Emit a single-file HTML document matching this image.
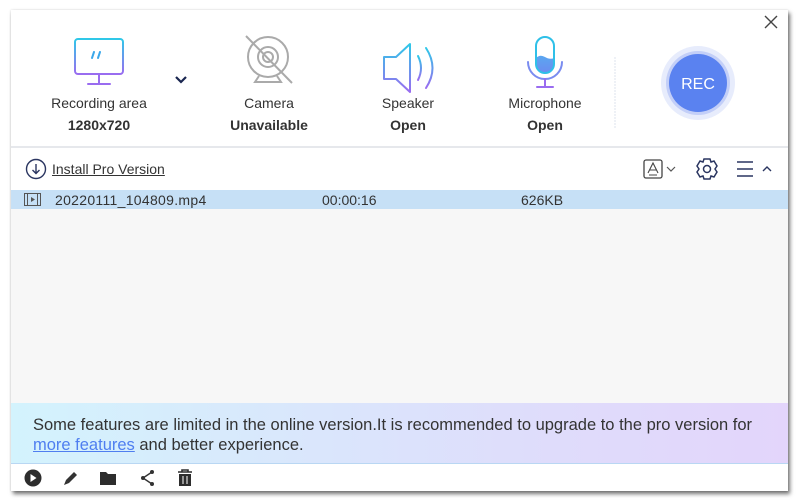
<!DOCTYPE html>
<html><head><meta charset="utf-8"><style>
*{margin:0;padding:0;box-sizing:border-box}
body{width:800px;height:504px;background:#fff;position:relative;overflow:hidden;font-family:"Liberation Sans","DejaVu Sans",sans-serif;color:#333}
#win{position:absolute;left:11px;top:10px;width:777px;height:481px;background:#fff;box-shadow:2px 3px 4px rgba(0,0,0,.55),0 0 2px rgba(0,0,0,.15)}
.abs{position:absolute}
.lbl{position:absolute;font-size:14px;color:#333;text-align:center;width:140px}
.val{position:absolute;font-size:14px;font-weight:bold;color:#333;text-align:center;width:140px}
</style></head><body>
<div id="win">
<svg class="abs" style="left:0;top:0" width="777" height="140">
<defs>
<linearGradient id="g" x1="0" y1="0" x2="0" y2="1"><stop offset="0" stop-color="#2fc8e8"/><stop offset="1" stop-color="#9a6cf0"/></linearGradient>
<linearGradient id="gf" x1="0" y1="0" x2="0" y2="1"><stop offset="0" stop-color="#5aa7f0"/><stop offset="1" stop-color="#6b8cf0"/></linearGradient>
</defs>
<g stroke="url(#g)" stroke-width="2" fill="none" stroke-linecap="round">
<rect x="64" y="29" width="48" height="35" rx="3"/>
<line x1="83" y1="42" x2="81" y2="48" stroke="#3aa7ea"/>
<line x1="89" y1="42" x2="87" y2="48" stroke="#3aa7ea"/>
</g>
<g stroke="#9a6cf0" stroke-width="2" fill="none" stroke-linecap="round">
<line x1="88" y1="65" x2="88" y2="74"/>
<line x1="77" y1="74" x2="99" y2="74"/>
</g>
<path d="M165 67 l5 5 l5 -5" stroke="#1a2650" stroke-width="2.2" fill="none"/>
<g stroke="#aaa" stroke-width="2" fill="none">
<circle cx="257" cy="47" r="20"/>
<circle cx="257" cy="47" r="10"/>
<circle cx="257" cy="47" r="5"/>
<path d="M248 66 L244 72 L270 72 L266 66"/>
<line x1="235" y1="26" x2="281" y2="73"/>
</g>
<g stroke="url(#g)" stroke-width="2" fill="none" stroke-linejoin="round" stroke-linecap="round">
<path d="M373 47 h12 l14 -13 v48 l-14 -13 h-12 z"/>
<path d="M407 46 q6 12 0 24"/>
<path d="M415 38 q13 20 0 40"/>
</g>
<path d="M525 48 q4 -4 9 -1 q5 3 9 1 v6 a9 9 0 0 1 -18 0z" fill="url(#gf)"/>
<rect x="525" y="27" width="18" height="36" rx="9" stroke="#2fc0e8" stroke-width="2" fill="none"/>
<path d="M517 52 a17 17 0 0 0 34 0" stroke="#7a8cf0" stroke-width="2" fill="none" stroke-linecap="round"/>
<g stroke="#9a6cf0" stroke-width="2" fill="none" stroke-linecap="round">
<line x1="534" y1="69" x2="534" y2="77"/>
<line x1="526" y1="77" x2="542" y2="77"/>
</g>
<line x1="604" y1="47" x2="604" y2="119" stroke="#dde3ee" stroke-width="1" stroke-dasharray="2,1"/>
<circle cx="687" cy="73" r="37" fill="#e7ecfc"/>
<circle cx="687" cy="73" r="32" fill="#c3cff8"/>
<circle cx="687" cy="73" r="29" fill="#5a82f0"/>
<text x="687" y="79" text-anchor="middle" font-family="Liberation Sans,sans-serif" font-size="16" fill="#fff">REC</text>
<path d="M754 6 l12 12 M766 6 l-12 12" stroke="#444" stroke-width="1.4"/>
</svg>
<div class="lbl" style="left:18px;top:85px">Recording area</div>
<div class="val" style="left:18px;top:107px">1280x720</div>
<div class="lbl" style="left:188px;top:85px">Camera</div>
<div class="val" style="left:188px;top:107px">Unavailable</div>
<div class="lbl" style="left:327px;top:85px">Speaker</div>
<div class="val" style="left:327px;top:107px">Open</div>
<div class="lbl" style="left:464px;top:85px">Microphone</div>
<div class="val" style="left:464px;top:107px">Open</div>
<div class="abs" style="left:0;top:136px;width:777px;height:2px;background:#e6e8ec"></div>
<svg class="abs" style="left:0;top:138px" width="777" height="42">
<circle cx="25" cy="21" r="9.5" stroke="#2a3560" stroke-width="1.4" fill="none"/>
<path d="M25 16 v9 M21.5 22 l3.5 3.5 l3.5 -3.5" stroke="#2a3560" stroke-width="1.4" fill="none"/>
<rect x="633" y="12" width="18" height="18" rx="2" stroke="#444" stroke-width="1.3" fill="none"/>
<path d="M637 25 l5 -10 l5 10 M638 27 h8 M639 22 h6" stroke="#444" stroke-width="1.1" fill="none"/>
<path d="M656 19 l4 4 l4 -4" stroke="#555" stroke-width="1.2" fill="none"/>
<g transform="translate(696 21)" stroke="#2a3560" stroke-width="1.5" fill="none">
<path d="M-3 -10 h6 l1 3 l3 -1 l3 5 l-2 3 l2 3 l-3 5 l-3 -1 l-1 3 h-6 l-1 -3 l-3 1 l-3 -5 l2 -3 l-2 -3 l3 -5 l3 1 z"/>
<circle r="3.5"/>
</g>
<path d="M726 14 h16 M726 21 h16 M726 28 h16" stroke="#2a3560" stroke-width="1.5"/>
<path d="M752 23 l4 -4 l4 4" stroke="#2a3560" stroke-width="1.4" fill="none"/>
</svg>
<div class="abs" style="left:41px;top:151px;font-size:14px;color:#333;text-decoration:underline">Install Pro Version</div>
<div class="abs" style="left:0;top:180px;width:777px;height:213px;background:#f7f7f7"></div>
<div class="abs" style="left:0;top:180px;width:777px;height:19px;background:#c6e0f6"></div>
<svg class="abs" style="left:13px;top:183px" width="18" height="14"><rect x="0.5" y="0.5" width="16" height="12" fill="none" stroke="#555"/><path d="M3.5 1v11 M13.5 1v11" stroke="#555"/><path d="M7 4 l4 2.5 l-4 2.5z" fill="#555"/></svg>
<div class="abs" style="left:44px;top:182px;font-size:14px;color:#333;letter-spacing:0.3px">20220111_104809.mp4</div>
<div class="abs" style="left:311px;top:182px;font-size:14px;color:#333">00:00:16</div>
<div class="abs" style="left:510px;top:182px;font-size:14px;color:#333">626KB</div>
<div class="abs" style="left:0;top:393px;width:777px;height:61px;background:linear-gradient(90deg,#d3f3fd,#dfdcfb 70%,#e3d5fb);border-bottom:1px solid #b9d7f3"></div>
<div class="abs" style="left:22px;top:405px;font-size:16.5px;color:#333;line-height:20px;width:760px;white-space:nowrap">Some features are limited in the online version.It is recommended to upgrade to the pro version for<br><span style="color:#4f7ef0;text-decoration:underline">more features</span> and better experience.</div>
<svg class="abs" style="left:0;top:455px" width="200" height="26">
<circle cx="22" cy="13" r="8.5" fill="#2d2d2d"/><path d="M19.5 9 l6 4 l-6 4z" fill="#fff"/>
<path d="M53 20 l2 -5 l8 -8 l3 3 l-8 8z" fill="#333"/>
<path d="M89 7 h6 l2 2 h8 v11 h-16z" fill="#2d2d2d"/>
<circle cx="141" cy="7" r="2" fill="#333"/><circle cx="141" cy="19" r="2" fill="#333"/><circle cx="132" cy="13" r="2" fill="#333"/>
<path d="M141 7 L132 13 L141 19" stroke="#333" stroke-width="1.4" fill="none"/>
<path d="M167 7 h14 M171 7 v-2 h6 v2" stroke="#2d2d2d" stroke-width="1.6" fill="none"/>
<path d="M168 9 h12 v12 h-12z" fill="#2d2d2d"/>
<path d="M172 11 v8 M176 11 v8" stroke="#fff" stroke-width="1"/>
</svg>
</div>
</body></html>
